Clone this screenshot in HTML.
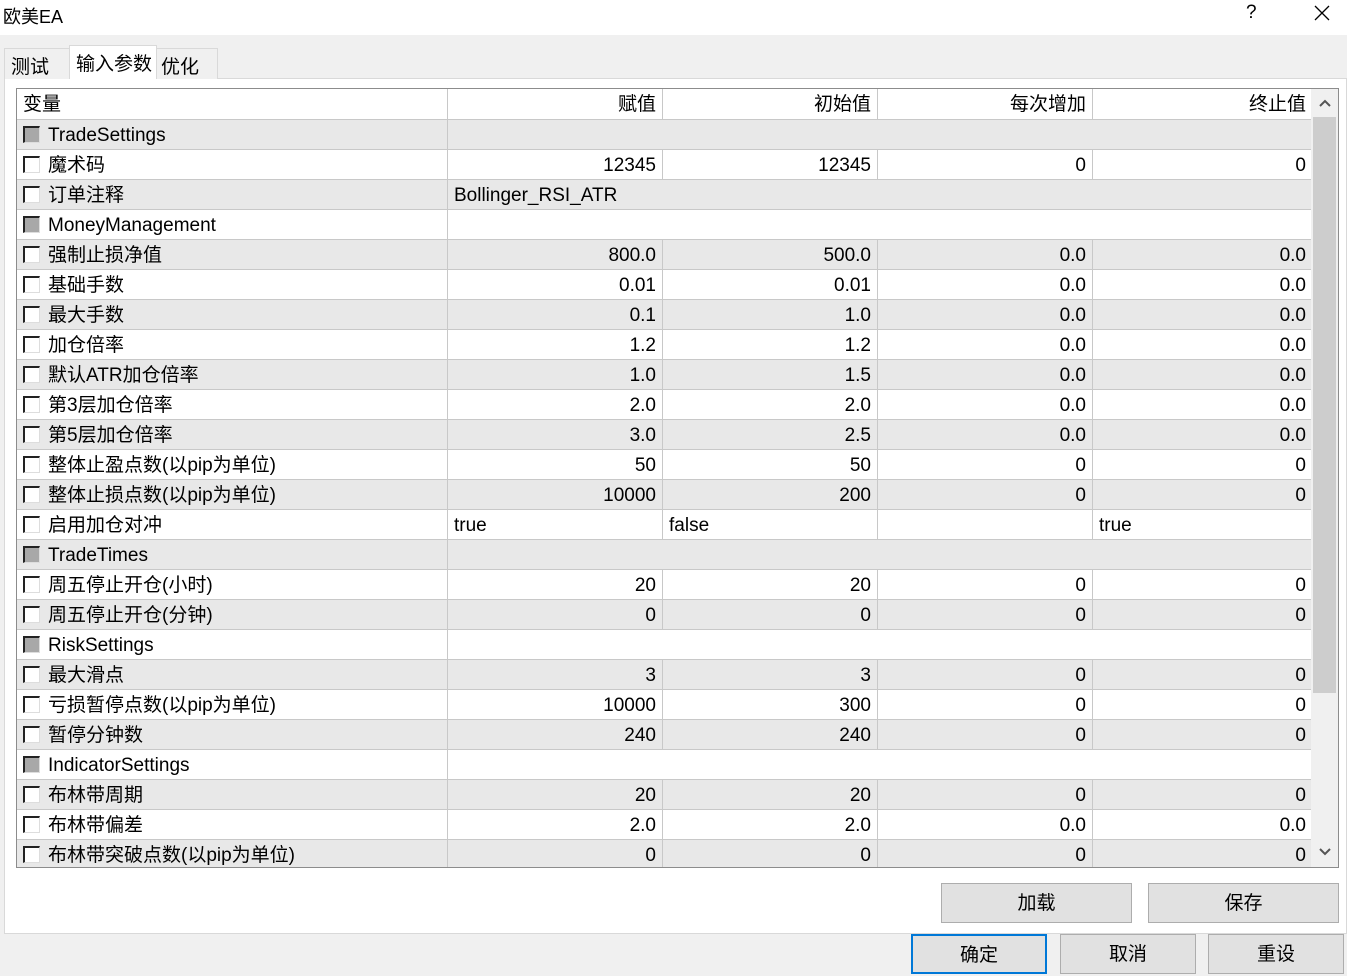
<!DOCTYPE html><html><head><meta charset="utf-8"><style>
*{margin:0;padding:0;box-sizing:border-box}
body{width:1347px;height:966px;background:#f0f0f0;font-family:"Liberation Sans","Noto Sans CJK SC",sans-serif;font-size:19px;color:#000;position:relative;overflow:hidden}
.a{position:absolute}
.title{left:0;top:0;width:1347px;height:35px;background:#fff}
.tab{top:48px;height:31px;border:1px solid #d9d9d9;border-bottom:none;background:#f0f0f0;padding:3px 0 0 6px}
.panel{left:4px;top:78px;width:1343px;height:856px;background:#fff;border:1px solid #d9d9d9}
.tbl{left:16px;top:88px;width:1323px;height:780px;border:1px solid #8c8c8c;background:#fff;overflow:hidden}
.row{position:absolute;left:0;width:1295px;height:30px;border-bottom:1px solid #c8c8c8}
.c{position:absolute;top:0;height:30px;line-height:32px;border-right:1px solid #c8c8c8;padding:0 6px;white-space:nowrap}
.r{text-align:right}
.cb{position:absolute;left:6px;top:6px;width:17px;height:17px;border:2px solid #222;border-right:1px solid #ddd;border-bottom:1px solid #ddd;background:#fff}
.g .cb{background:#a8a8a8}
.btn{background:#e1e1e1;border:1px solid #adadad;text-align:center;line-height:40px}
</style></head><body>
<div class="a title"><span class="a" style="left:3px;top:3px;font-size:18px">欧美EA</span><span class="a" style="left:1246px;top:2px">?</span>
<svg class="a" style="left:1314px;top:5px" width="16" height="16"><path d="M1 1L15 15M15 1L1 15" stroke="#000" stroke-width="1.3"/></svg></div>
<div class="a panel"></div>
<div class="a tab" style="left:4px;width:66px">测试</div>
<div class="a tab" style="left:69px;top:45px;height:34px;width:88px;background:#fff">输入参数</div>
<div class="a tab" style="left:156px;width:62px;padding-left:4px">优化</div>
<div class="a tbl" id="t">
<div class="row" style="top:0;height:31px;border-bottom:1px solid #c8c8c8;background:#fff">
<div class="c" style="left:0;width:431px">变量</div><div class="c r" style="left:431px;width:215px">赋值</div><div class="c r" style="left:646px;width:215px">初始值</div><div class="c r" style="left:861px;width:215px">每次增加</div><div class="c r" style="left:1076px;width:219px;border:none">终止值</div></div>
</div>
<div class="a" style="left:1311px;top:89px;width:27px;height:778px;background:#f0f0f0"></div>
<div class="a" style="left:1313px;top:117px;width:23px;height:576px;background:#cdcdcd"></div>
<svg class="a" style="left:1318px;top:98px" width="14" height="10"><path d="M2 8L7 3L12 8" stroke="#555" stroke-width="2" fill="none"/></svg>
<svg class="a" style="left:1318px;top:847px" width="14" height="10"><path d="M2 2L7 7L12 2" stroke="#555" stroke-width="2" fill="none"/></svg>
<div class="a btn" style="left:941px;top:883px;width:191px;height:40px">加载</div>
<div class="a btn" style="left:1148px;top:883px;width:191px;height:40px">保存</div>
<div class="a btn" style="left:911px;top:934px;width:136px;height:40px;border:2px solid #0078d7">确定</div>
<div class="a btn" style="left:1060px;top:934px;width:136px;height:40px">取消</div>
<div class="a btn" style="left:1208px;top:934px;width:136px;height:40px">重设</div>
<script>
var R=[["TradeSettings",1],["魔术码",0,"12345","12345","0","0"],["订单注释",0,"Bollinger_RSI_ATR",null],["MoneyManagement",1],["强制止损净值",0,"800.0","500.0","0.0","0.0"],["基础手数",0,"0.01","0.01","0.0","0.0"],["最大手数",0,"0.1","1.0","0.0","0.0"],["加仓倍率",0,"1.2","1.2","0.0","0.0"],["默认ATR加仓倍率",0,"1.0","1.5","0.0","0.0"],["第3层加仓倍率",0,"2.0","2.0","0.0","0.0"],["第5层加仓倍率",0,"3.0","2.5","0.0","0.0"],["整体止盈点数(以pip为单位)",0,"50","50","0","0"],["整体止损点数(以pip为单位)",0,"10000","200","0","0"],["启用加仓对冲",0,"true","false","","true","L"],["TradeTimes",1],["周五停止开仓(小时)",0,"20","20","0","0"],["周五停止开仓(分钟)",0,"0","0","0","0"],["RiskSettings",1],["最大滑点",0,"3","3","0","0"],["亏损暂停点数(以pip为单位)",0,"10000","300","0","0"],["暂停分钟数",0,"240","240","0","0"],["IndicatorSettings",1],["布林带周期",0,"20","20","0","0"],["布林带偏差",0,"2.0","2.0","0.0","0.0"],["布林带突破点数(以pip为单位)",0,"0","0","0","0"]];
var h="";R.forEach(function(r,i){var bg=i%2==0?"#e8e8e8":"#fff";h+='<div class="row'+(r[1]?' g':'')+'" style="top:'+(31+30*i)+'px;background:'+bg+'"><div class="c" style="left:0;width:431px;padding-left:31px"><span class="cb"></span>'+r[0]+'</div>';
if(r[1]){h+='</div>';return}
if(r[3]===null){h+='<div class="c" style="left:431px;width:864px;border:none">'+r[2]+'</div></div>';return}
var L=r[6]?"":" r",x=[431,646,861,1076],w=[215,215,215,219];
for(var k=0;k<4;k++)h+='<div class="c'+L+'" style="left:'+x[k]+'px;width:'+w[k]+'px'+(k==3?';border:none':'')+'">'+r[2+k]+'</div>';
h+='</div>'});
document.getElementById("t").insertAdjacentHTML("beforeend",h);
</script>
</body></html>
